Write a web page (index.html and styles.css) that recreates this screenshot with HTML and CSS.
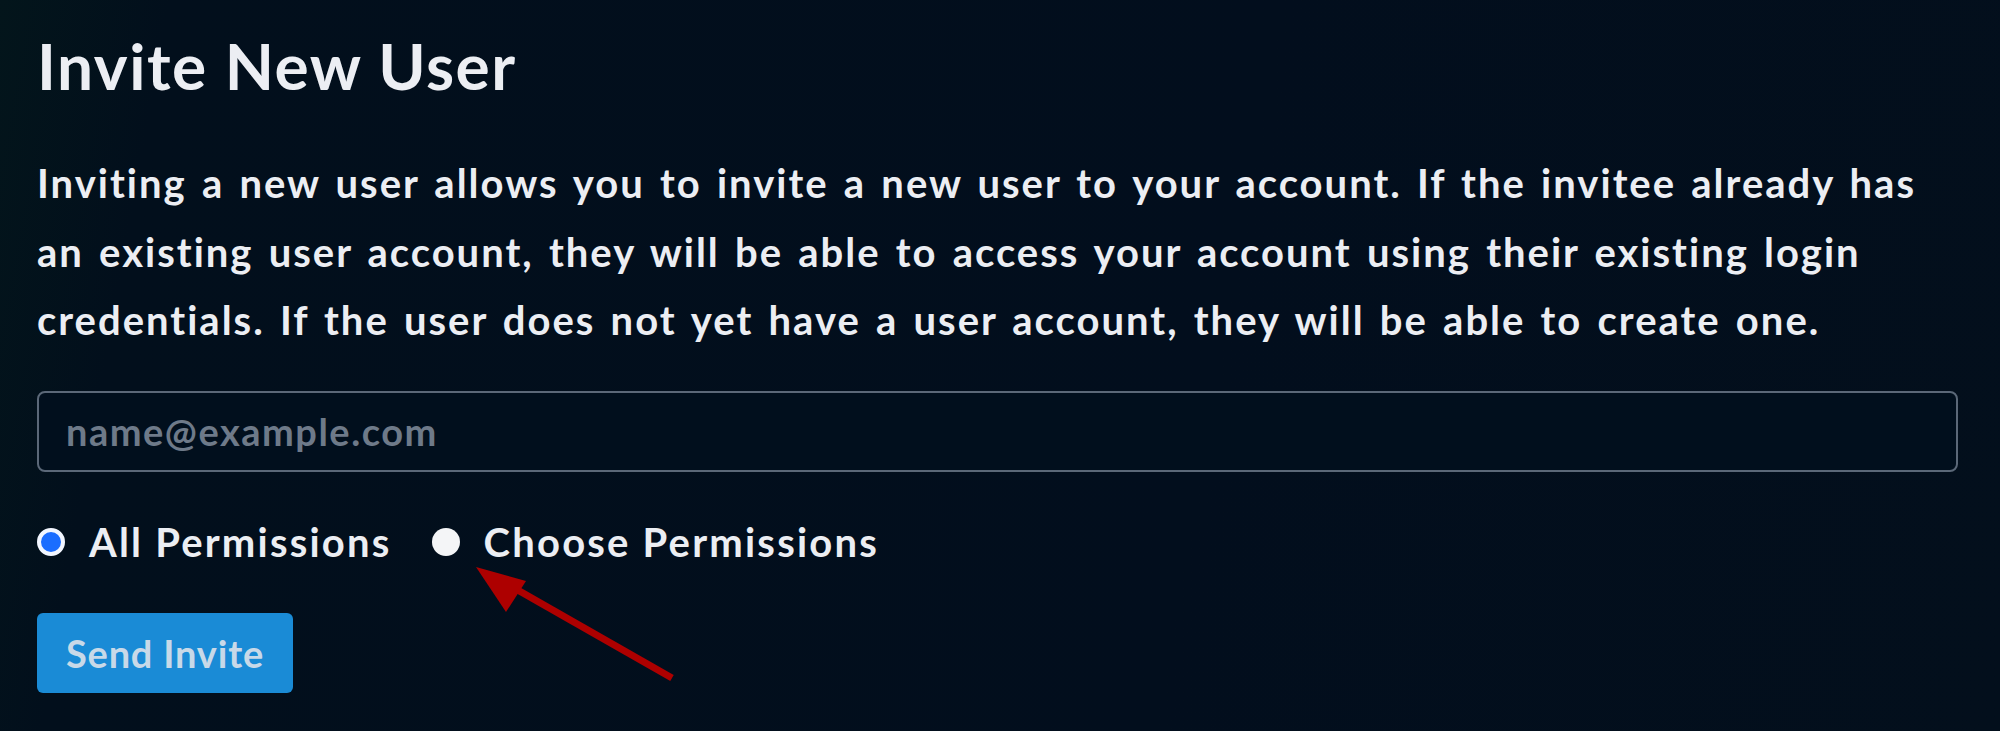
FILE: index.html
```html
<!DOCTYPE html>
<html lang="en">
<head>
<meta charset="utf-8">
<title>Invite New User</title>
<link rel="stylesheet" href="styles.css">
</head>
<body>
<main class="panel">
  <h1 class="title">Invite New User</h1>
  <p class="intro">Inviting a new user allows you to invite a new user to your account. If the invitee already has an existing user account, they will be able to access your account using their existing login credentials. If the user does not yet have a user account, they will be able to create one.</p>
  <form class="invite-form">
    <input class="email" type="email" placeholder="name@example.com">
    <div class="perms">
      <label class="perm"><span class="radio radio-on"></span><span class="perm-text">All Permissions</span></label>
      <label class="perm"><span class="radio radio-off"></span><span class="perm-text">Choose Permissions</span></label>
    </div>
    <button class="send" type="button">Send Invite</button>
  </form>
  <svg class="arrow" width="240" height="150" viewBox="0 0 240 150">
    <line x1="40" y1="23" x2="212" y2="121" stroke="#ad0000" stroke-width="7" stroke-linecap="butt"/>
    <polygon points="16,10 66,24 46,55" fill="#ad0000"/>
  </svg>
</main>
</body>
</html>
```
FILE: styles.css
```css
html, body {
  margin: 0;
  padding: 0;
}
body {
  width: 2000px;
  height: 731px;
  overflow: hidden;
  background: linear-gradient(100deg, #03151b 0%, #020f1c 8%, #020e1d 60%, #030f1c 100%);
  font-family: "Lato", "Noto Sans", sans-serif;
  font-weight: 700;
  color: #eef0f4;
}
.panel {
  position: relative;
  padding: 27px 42px 0 37px;
}
.title {
  margin: 0;
  font-size: 64px;
  line-height: 78px;
  font-weight: 700;
  letter-spacing: 1.5px;
  color: #eceef3;
}
.intro {
  margin: 44px 0 0;
  font-size: 40px;
  line-height: 68.5px;
  letter-spacing: 2px;
  word-spacing: 3.5px;
  color: #eceef3;
}
.invite-form {
  display: flex;
  flex-direction: column;
  align-items: flex-start;
  margin-top: 36px;
}
.email {
  box-sizing: border-box;
  width: 1921px;
  height: 81px;
  padding: 0 0 0 27px;
  border: 2px solid #5b6878;
  border-radius: 8px;
  background: #010f1d;
  font-family: inherit;
  font-weight: 700;
  font-size: 38px;
  letter-spacing: 1.5px;
  color: #dfe3ea;
  outline: none;
}
.email::placeholder {
  color: #6e7a89;
}
.perms {
  display: flex;
  align-items: center;
  gap: 40px;
  margin-top: 52px;
  height: 36px;
}
.perm {
  display: flex;
  align-items: center;
  gap: 24px;
}
.radio {
  box-sizing: border-box;
  display: block;
  width: 28px;
  height: 28px;
  border-radius: 50%;
}
.radio-on {
  background: #1b6dff;
  border: 4px solid #f2f6ff;
}
.radio-off {
  background: #f4f5f7;
}
.perm-text {
  font-size: 40px;
  letter-spacing: 2.2px;
  color: #eceef3;
}
.send {
  margin-top: 53px;
  box-sizing: border-box;
  width: 256px;
  height: 80px;
  border: none;
  border-radius: 6px;
  background: #1a8bd6;
  color: #c8d9e8;
  font-family: inherit;
  font-weight: 700;
  font-size: 38px;
  letter-spacing: 0.8px;
  padding: 0;
}
.arrow {
  position: absolute;
  left: 460px;
  top: 557px;
}
```
